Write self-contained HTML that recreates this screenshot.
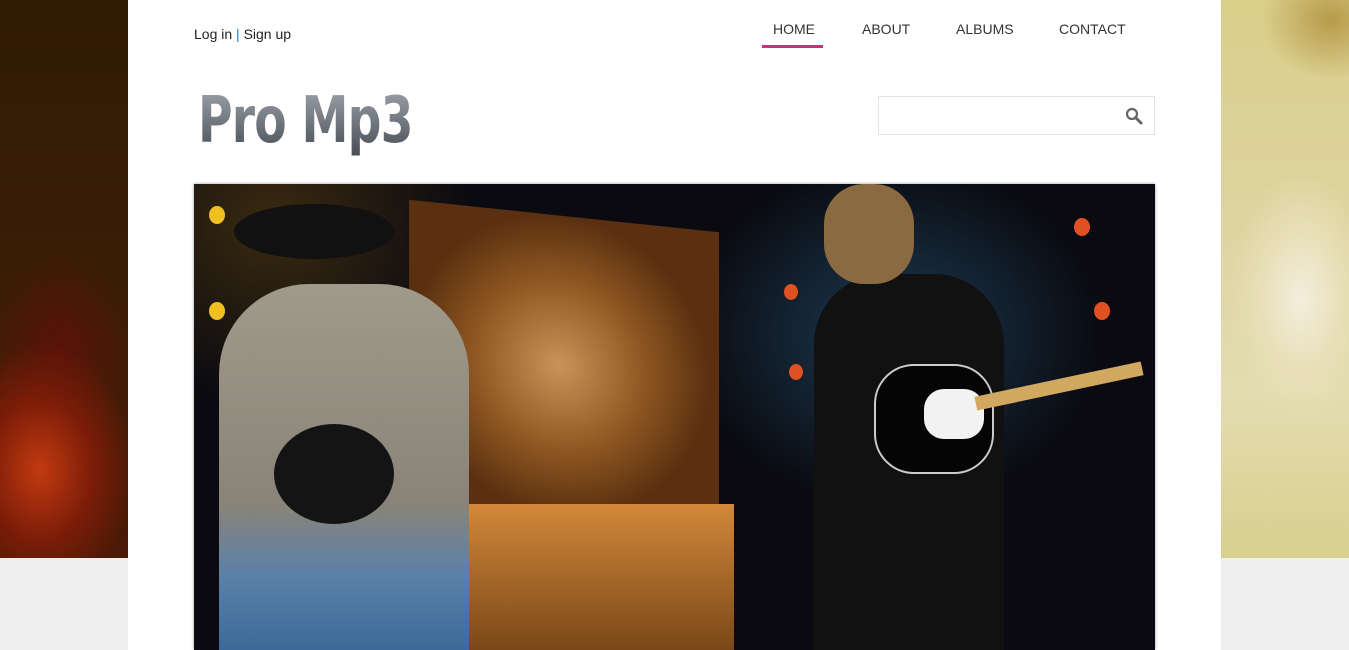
<!DOCTYPE html>
<html><head><meta charset="utf-8"><style>
*{margin:0;padding:0;box-sizing:border-box}
body{width:1349px;height:650px;overflow:hidden;position:relative;background:#efefef;font-family:"Liberation Sans",sans-serif}
.bgl{position:absolute;left:0;top:0;width:128px;height:558px;background:radial-gradient(ellipse 120px 160px at 40px 470px,#c23a10 0%,#7a1c08 45%,transparent 80%),radial-gradient(ellipse 90px 120px at 60px 350px,#5a1208 0%,transparent 80%),linear-gradient(#301a04,#3a1e06 50%,#4a1a06)}
.bgr{position:absolute;left:1221px;top:0;width:128px;height:558px;background:radial-gradient(ellipse 80px 140px at 80px 300px,#f3eedd 0%,#e8dfb8 50%,transparent 90%),radial-gradient(ellipse 70px 60px at 110px 20px,#b79a4a,transparent),linear-gradient(#d9cf8a,#ddd4a0 40%,#e3dcb0 70%,#d8d08e)}
.wrap{position:absolute;left:128px;top:0;width:1093px;height:650px;background:#fff}
.login{position:absolute;left:66px;top:26px;font-size:14px;color:#222}
.login span{color:#1a7fc0}
.nav{position:absolute;top:21px;font-size:14px;color:#333}
.hl{position:absolute;left:634px;top:45px;width:61px;height:3px;background:#d42a7c}
.logo{position:absolute;left:70px;top:84px;font-size:64px;font-weight:bold;letter-spacing:-1px;font-family:"DejaVu Sans Condensed","Liberation Sans",sans-serif;transform:scaleX(.82);transform-origin:left;background:linear-gradient(#a0a6ac,#454b53);-webkit-background-clip:text;color:transparent}
.search{position:absolute;left:750px;top:96px;width:277px;height:39px;border:1px solid #e3e3e3}
.photo{position:absolute;left:66px;top:184px;width:961px;height:466px;overflow:hidden;background:#0a0a10;box-shadow:0 0 3px #999}
.p{position:absolute}
</style></head><body>
<div class="bgl"></div><div class="bgr"></div>
<div class="wrap">
<div class="login">Log in <span>|</span> Sign up</div>
<div class="nav" style="left:645px">HOME</div>
<div class="nav" style="left:734px">ABOUT</div>
<div class="nav" style="left:828px">ALBUMS</div>
<div class="nav" style="left:931px">CONTACT</div>
<div class="hl"></div>
<div class="logo">Pro Mp3</div>
<div class="search"><svg style="position:absolute;right:11px;top:10px" width="18" height="18" viewBox="0 0 18 18"><circle cx="7" cy="7" r="5" fill="none" stroke="#666" stroke-width="2.2"/><path d="M10.5 10.5L16 16" stroke="#666" stroke-width="3" stroke-linecap="round"/></svg></div>
<div class="photo">
<div class="p" style="left:0;top:0;width:961px;height:466px;background:radial-gradient(ellipse 300px 250px at 700px 150px,#1c3b52 0%,transparent 70%),radial-gradient(ellipse 200px 180px at 80px 40px,#3a2a10,transparent)"></div>
<div class="p" style="left:215px;top:32px;width:310px;height:434px;background:radial-gradient(ellipse 150px 150px at 150px 150px,#c99458,#8a5420 60%,#5a3010);transform:skewY(6deg)"></div>
<div class="p" style="left:240px;top:320px;width:300px;height:146px;background:linear-gradient(#d2883a,#7a4818)"></div>
<div class="p" style="left:25px;top:100px;width:250px;height:366px;background:linear-gradient(#a09a8c,#8a8478 60%,#5a80a8 80%,#3c6a98);border-radius:90px 90px 0 0"></div>
<div class="p" style="left:40px;top:20px;width:160px;height:55px;background:#111;border-radius:50%"></div>
<div class="p" style="left:80px;top:240px;width:120px;height:100px;background:#141414;border-radius:50%"></div>
<div class="p" style="left:620px;top:90px;width:190px;height:376px;background:#111;border-radius:70px 70px 0 0"></div>
<div class="p" style="left:630px;top:0;width:90px;height:100px;background:#8a6a40;border-radius:40px"></div>
<div class="p" style="left:680px;top:180px;width:120px;height:110px;background:#050505;border:2px solid #ccc;border-radius:40px"></div>
<div class="p" style="left:730px;top:205px;width:60px;height:50px;background:#f2f2f2;border-radius:20px"></div>
<div class="p" style="left:780px;top:195px;width:170px;height:14px;background:#d0a860;transform:rotate(-12deg)"></div>
<div class="p" style="left:15px;top:22px;width:16px;height:18px;background:#f0c020;border-radius:50%"></div>
<div class="p" style="left:15px;top:118px;width:16px;height:18px;background:#f0c020;border-radius:50%"></div>
<div class="p" style="left:880px;top:34px;width:16px;height:18px;background:#e05020;border-radius:50%"></div>
<div class="p" style="left:900px;top:118px;width:16px;height:18px;background:#e05020;border-radius:50%"></div>
<div class="p" style="left:590px;top:100px;width:14px;height:16px;background:#e05020;border-radius:50%"></div>
<div class="p" style="left:595px;top:180px;width:14px;height:16px;background:#e05020;border-radius:50%"></div>
</div>
</div>
</body></html>
